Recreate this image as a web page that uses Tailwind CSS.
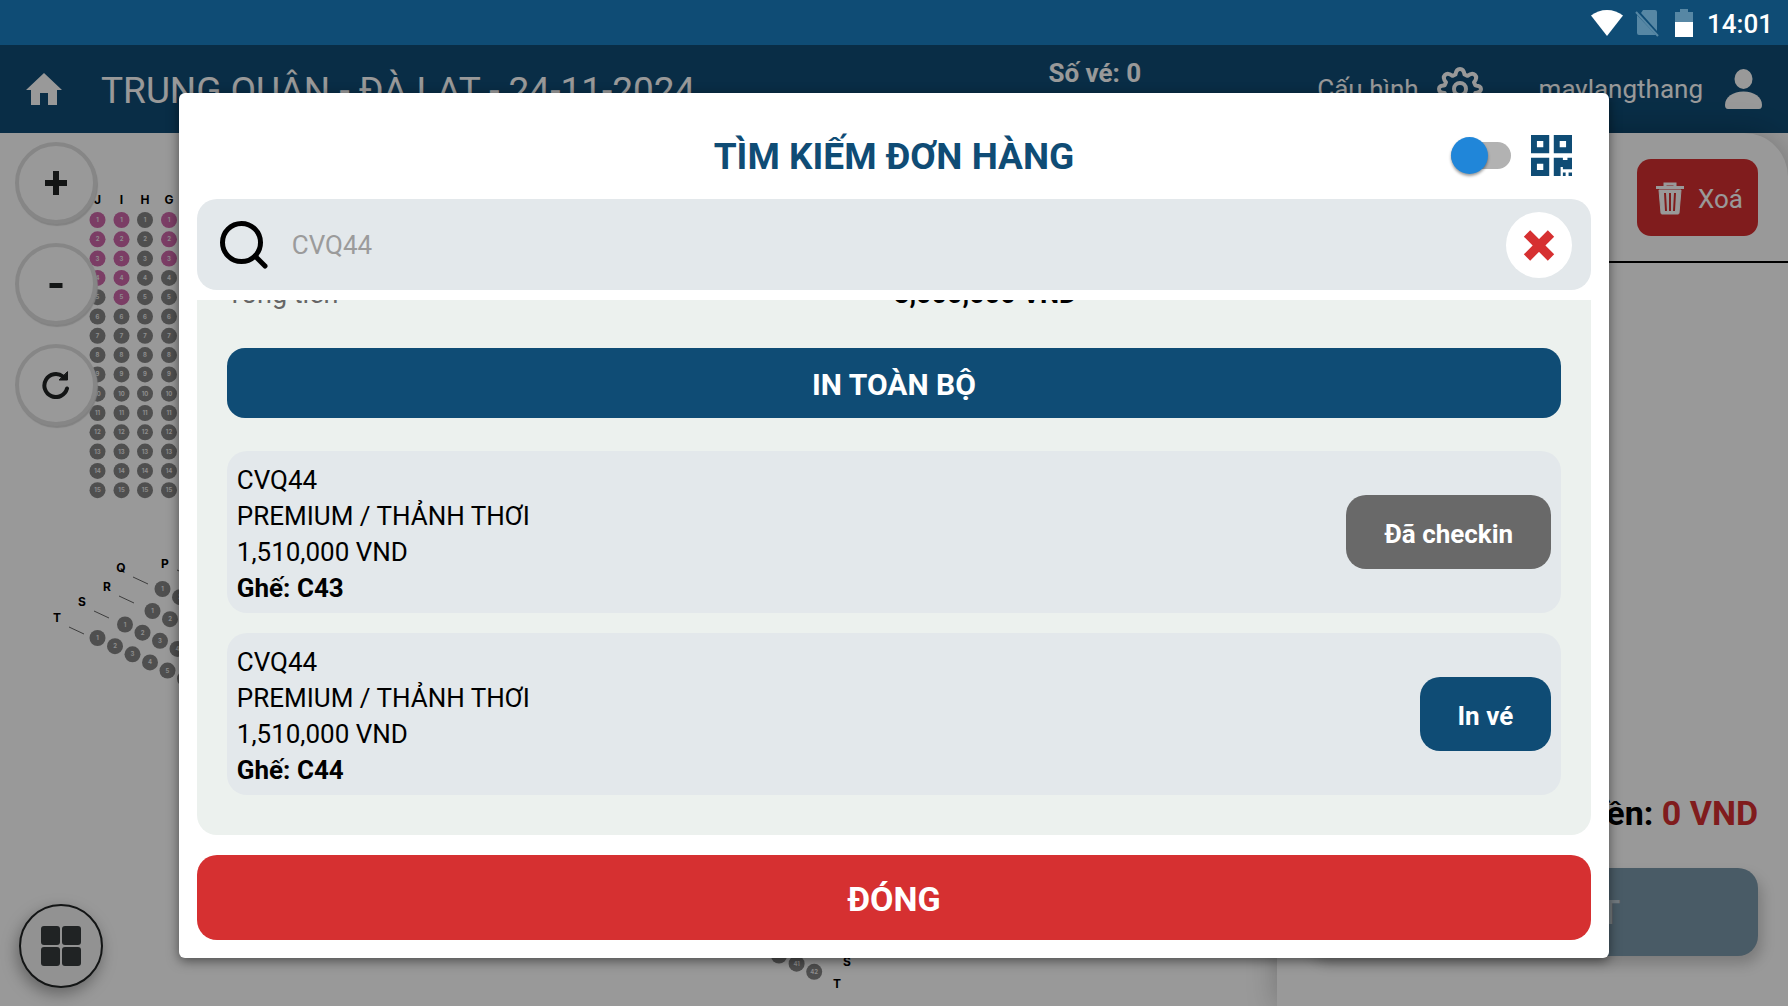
<!DOCTYPE html>
<html lang="vi">
<head>
    <meta charset="UTF-8">
    <meta name="viewport" content="width=device-width, initial-scale=1.0">
    <title>Tìm kiếm đơn hàng</title>
    <script src="https://cdn.jsdelivr.net/npm/@tailwindcss/browser@4"></script>
</head>
<body class="flex h-screen flex-col overflow-hidden bg-white font-[Roboto,sans-serif] text-[26px] leading-[36px] text-black">
    <!-- Status bar -->
    <div class="flex h-[45px] shrink-0 items-center justify-end bg-[#0f4c75] pr-[15px] font-medium text-white">
        <svg class="mr-3 h-[26px] w-8" viewBox="0 0 32 26" fill="#fff"><path d="M16 26 0 5.500C4.500 2 10 0 16 0s11.500 2 16 5.500z"/></svg>
        <svg class="mr-4 h-7 w-6" viewBox="0 0 24 28"><path fill="#5787a4" d="M8 1h12q2 0 2 2v19L6 4zM2 6l19 20H4q-2 0-2-2z"/><path stroke="#5787a4" stroke-width="2" d="M1 3l22 24"/></svg>
        <svg class="mr-[14px] h-7 w-[18px]" viewBox="0 0 18 28"><path fill="#5787a4" d="M5 0h8v3h5v11H0V3h5z"/><path fill="#fff" d="M0 13h18v15H0z"/></svg>
        <span class="pt-0.5">14:01</span>
    </div>

    <div class="relative flex min-h-0 flex-1 flex-col">
        <header class="flex h-[88px] shrink-0 items-center bg-[#0f4c75] px-[26px] text-white">
            <a href="#" aria-label="Trang chủ">
                <svg class="h-8 w-9" viewBox="0 0 36 32" fill="#fff"><path d="M18 0 36 17h-5v15h-9V20h-8v12H5V17H0z"/></svg>
            </a>
            <h1 class="ml-[39px] flex-1 pt-1 text-[37px] leading-[44px]">TRUNG QUÂN - ĐÀ LẠT - 24-11-2024</h1>
            <span class="mr-44 self-start pt-[10px] font-bold">Số vé: 0</span>
            <a href="#" class="flex items-center gap-[18px]">
                Cấu hình
                <svg class="size-[46px]" viewBox="0 0 46 46" fill="none" stroke="#fff" stroke-width="4" stroke-linejoin="round">
                    <path d="M23 3c3 0 4 2 4.500 5.500l3 1.300C33.500 7.500 36 7 38 9s1.300 4.500-1 7.300l1.300 3C42 20 44 20.500 44 23s-2 3.500-5.700 4l-1.300 3c2.300 2.800 3 5 1 7s-4.500 1.300-7.500-1l-3 1.300C27 41 26 43 23 43s-4-2-4.500-5.700l-3-1.300c-3 2.300-5.500 3-7.500 1s-1.300-4.200 1-7l-1.300-3C4 26.500 2 26 2 23s2-3 5.700-3.700l1.300-3C6.700 13.500 6 11 8 9s4.500-1.500 7.500.800l3-1.300C19 5 20 3 23 3z"/>
                    <circle cx="23" cy="23" r="6"/>
                </svg>
            </a>
            <a href="#" class="ml-14 flex items-center gap-[22px]">
                maylangthang
                <svg class="h-10 w-[37px]" viewBox="0 0 37 40" fill="#fff"><ellipse cx="18.500" cy="10" rx="9" ry="10"/><path d="M0 36C0 28 8 22.500 18.500 22.500S37 28 37 36q0 4-3 4H3q-3 0-3-4z"/></svg>
            </a>
        </header>

        <main class="flex min-h-0 flex-1">
            <section class="relative flex-1" aria-label="Sơ đồ ghế">
                <svg id="seatMap" class="absolute inset-0 h-full w-full font-[Inter,sans-serif]"></svg>
                <div class="absolute top-[9px] left-[15px] flex flex-col gap-[19px]">
                    <button class="flex size-[82px] items-center justify-center rounded-full border-4 border-[#e0e0e0] bg-white text-[#202324] shadow-[1px_2px_1px_#d8d8d8]" aria-label="Phóng to">
                        <svg class="size-6" viewBox="0 0 24 24" stroke="currentColor" stroke-width="6"><path d="M1 12h22M12 0v24"/></svg>
                    </button>
                    <button class="flex size-[82px] items-center justify-center rounded-full border-4 border-[#e0e0e0] bg-white text-[#202324] shadow-[1px_2px_1px_#d8d8d8]" aria-label="Thu nhỏ">
                        <svg class="size-6" viewBox="0 0 24 24" stroke="currentColor" stroke-width="5"><path d="M5.500 13.500h13"/></svg>
                    </button>
                    <button class="flex size-[82px] items-center justify-center rounded-full border-4 border-[#e0e0e0] bg-white text-[#202324] shadow-[1px_2px_1px_#d8d8d8]" aria-label="Tải lại">
                        <svg class="size-7" viewBox="0 0 28 28" fill="none" stroke="currentColor" stroke-width="4" stroke-linecap="round"><path d="M25 17.500A11.500 11.500 0 1 1 21 5.500"/><path d="M25.500 1v8h-8z" fill="currentColor" stroke-width="1"/></svg>
                    </button>
                </div>
                <button class="absolute bottom-[18px] left-[19px] flex size-[84px] items-center justify-center rounded-full border-2 border-[#202324] bg-[#f3f3f3] text-[#363b3d] shadow-[-2px_6px_16px_rgba(0,0,0,0.35)]" aria-label="Danh mục">
                    <svg class="size-10" viewBox="0 0 40 40" fill="currentColor"><rect width="19" height="19" rx="3"/><rect x="21" width="19" height="19" rx="3"/><rect y="21" width="19" height="19" rx="3"/><rect x="21" y="21" width="19" height="19" rx="3"/></svg>
                </button>
            </section>

            <aside class="flex w-2/7 flex-col rounded-tr-[44px] bg-white shadow-[0_0_30px_rgba(0,0,0,0.25)]">
                <div class="flex justify-end border-b-2 border-black px-[30px] pt-[26px] pb-[25px]">
                    <button class="flex h-[77px] w-[121px] items-center justify-center gap-[14px] rounded-[14px] bg-[#d63031] pt-0.5 pl-1 text-white">
                        <svg class="h-[33px] w-7" viewBox="0 0 28 33" fill="none" stroke="#fff" stroke-width="3"><path d="M0 5.500h28M9 5V2h10v3"/><path d="M3 8h22l-2 23q0 1-1 1H6q-1 0-1-1z" fill="#fff" stroke-width="1"/><path stroke="#d63031" stroke-width="2" d="M9 11l1 18M14 11v18M19 11l-1 18"/></svg>
                        Xoá
                    </button>
                </div>
                <div class="mt-auto px-[30px] pb-[50px]">
                    <p class="text-right text-[34px] leading-[40px] font-bold">Tổng tiền: <span class="text-[#d63031]">0 VND</span></p>
                    <button class="mt-[35px] h-[88px] w-full rounded-[20px] bg-[#7b98aa] text-[34px] font-medium text-[#c0cdd6] shadow-[4px_8px_14px_rgba(0,0,0,0.2)]">CHECKOUT</button>
                </div>
            </aside>
        </main>

        <!-- Order search dialog -->
        <div class="absolute inset-0 flex items-center justify-center bg-black/40">
            <div role="dialog" aria-labelledby="dialogTitle" class="flex h-9/10 w-4/5 flex-col rounded-md bg-white p-[18px] shadow-[0_3px_12px_rgba(0,0,0,0.5)]">
                <div class="grid h-[88px] shrink-0 grid-cols-[1fr_auto_1fr] items-center">
                    <h2 id="dialogTitle" class="col-start-2 pt-1 text-[37px] leading-[44px] font-bold text-[#0f4c75]">TÌM KIẾM ĐƠN HÀNG</h2>
                    <div class="flex items-center justify-end gap-5 pr-[19px]">
                        <input type="checkbox" aria-label="Quét mã QR" class="relative h-[27px] w-[60px] appearance-none rounded-full bg-[#b2b2b2] before:absolute before:-top-[5px] before:left-0 before:size-[37px] before:rounded-full before:bg-[#2086d9] before:shadow-[0_2px_3px_rgba(0,0,0,0.4)]">
                        <svg class="size-[41px]" viewBox="3 3 18 18" fill="#0f4c75"><path d="M3 11h8V3H3zm2.600-5.400h2.800v2.800H5.600zM3 21h8v-8H3zm2.600-5.400h2.800v2.800H5.600zM13 3v8h8V3zm5.400 5.400h-2.800V5.600h2.800zM13 13h4v1h2v-1h2v5h-4v-1h-1v4h-3zM17 19.500h1.200V21H17zM19.500 19.500H21V21h-1.500z"/></svg>
                    </div>
                </div>

                <div class="flex h-[91px] shrink-0 items-center rounded-[20px] bg-[#e3e8eb] pr-[19px] pl-[22px]">
                    <svg class="size-[50px]" viewBox="0 0 50 50" fill="none" stroke="#000" stroke-width="5" stroke-linecap="round"><circle cx="22.500" cy="22.500" r="19"/><path d="M36 36l10 10"/></svg>
                    <input type="text" aria-label="Mã đơn hàng" placeholder="CVQ44" class="ml-[23px] h-full min-w-0 flex-1 bg-transparent outline-none placeholder:text-[#9b9b9b]">
                    <button class="flex size-[66px] items-center justify-center rounded-full bg-white" aria-label="Xoá tìm kiếm">
                        <svg class="size-8" viewBox="0 0 32 32" stroke="#d63031" stroke-width="8" stroke-linejoin="round"><path stroke-width="9" d="M4 4.500l24 24M28 4.500l-24 24"/></svg>
                    </button>
                </div>

                <div class="mt-[10px] flex min-h-0 flex-1 flex-col justify-end overflow-hidden rounded-b-[20px] bg-[#ecf1ee] px-[30px] pb-10">
                    <div class="grid shrink-0 grid-cols-2 text-[27px]">
                        <span class="text-[#666]">Tổng tiền</span>
                        <span class="font-bold">3,000,000 VND</span>
                    </div>
                    <button class="mt-9 h-[70px] shrink-0 rounded-[18px] bg-[#0f4c75] pt-1 text-[30px] font-bold text-white">IN TOÀN BỘ</button>
                    <div class="mt-[33px] flex shrink-0 items-center justify-between rounded-[20px] bg-[#e3e8eb] px-[10px]">
                        <div class="pt-[11px] pb-[7px]">
                            <p>CVQ44</p>
                            <p>PREMIUM / THẢNH THƠI</p>
                            <p>1,510,000 VND</p>
                            <p class="font-bold">Ghế: C43</p>
                        </div>
                        <button class="h-[74px] rounded-[20px] bg-[#696969] px-[38px] pt-1 font-bold text-white">Đã checkin</button>
                    </div>
                    <div class="mt-5 flex shrink-0 items-center justify-between rounded-[20px] bg-[#e3e8eb] px-[10px]">
                        <div class="pt-[11px] pb-[7px]">
                            <p>CVQ44</p>
                            <p>PREMIUM / THẢNH THƠI</p>
                            <p>1,510,000 VND</p>
                            <p class="font-bold">Ghế: C44</p>
                        </div>
                        <button class="h-[74px] rounded-[20px] bg-[#0f4c75] px-[38px] pt-1 font-bold text-white">In vé</button>
                    </div>
                </div>

                <button class="mt-5 h-[85px] shrink-0 rounded-[20px] bg-[#d63031] pt-1 text-[34px] font-bold text-white">ĐÓNG</button>
            </div>
        </div>
    </div>

    <script>
        const map = document.getElementById('seatMap');
        const NS = 'http://www.w3.org/2000/svg';

        const add = (tag, attrs, text) => {
            const el = document.createElementNS(NS, tag);
            for (const key in attrs) el.setAttribute(key, attrs[key]);
            if (text) el.textContent = text;
            map.appendChild(el);
        };
        const seat = (x, y, number, color) => {
            add('circle', { cx: x, cy: y, r: 8, fill: color });
            add('text', { x: x, y: y + 2, 'font-size': 6, 'font-weight': 600, fill: '#f0f0f0', 'text-anchor': 'middle' }, String(number));
        };
        const label = (x, y, name) => {
            add('text', { x: x, y: y + 4, 'font-size': 12, 'font-weight': 700, 'text-anchor': 'middle' }, name);
        };

        // straight block: row name, x, number of premium seats
        [['J', 97.5, 4], ['I', 121.5, 5], ['H', 145, 0], ['G', 169, 3]].forEach(([name, x, premium]) => {
            label(x, 67, name);
            for (let i = 0; i < 15; i++) {
                seat(x, 87 + i * 19.3, i + 1, i < premium ? '#cd66a8' : '#848484');
            }
        });

        // slanted block: row name, label x/y, first seat x/y, seats
        [['Q', 121, 435, 162.5, 456, 2], ['R', 107, 454, 152.5, 478, 3], ['S', 82, 469, 125, 491.5, 4], ['T', 57, 485, 97.5, 505, 6]].forEach(([name, lx, ly, x, y, count]) => {
            label(lx, ly, name);
            add('line', { x1: lx + 12, y1: ly + 9, x2: lx + 27, y2: ly + 16, stroke: '#222', 'stroke-width': 0.7 });
            for (let i = 0; i < count; i++) seat(x + i * 17.5, y + i * 8.15, i + 1, '#848484');
        });
        label(165, 431, 'P');
        add('line', { x1: 177, y1: 437, x2: 192, y2: 444, stroke: '#222', 'stroke-width': 0.7 });

        [40, 41, 42].forEach((n, i) => seat(779 + i * 17.6, 822.5 + i * 8.15, n, '#848484'));
        label(847, 829, 'S');
        label(837, 851, 'T');
    </script>
</body>
</html>
